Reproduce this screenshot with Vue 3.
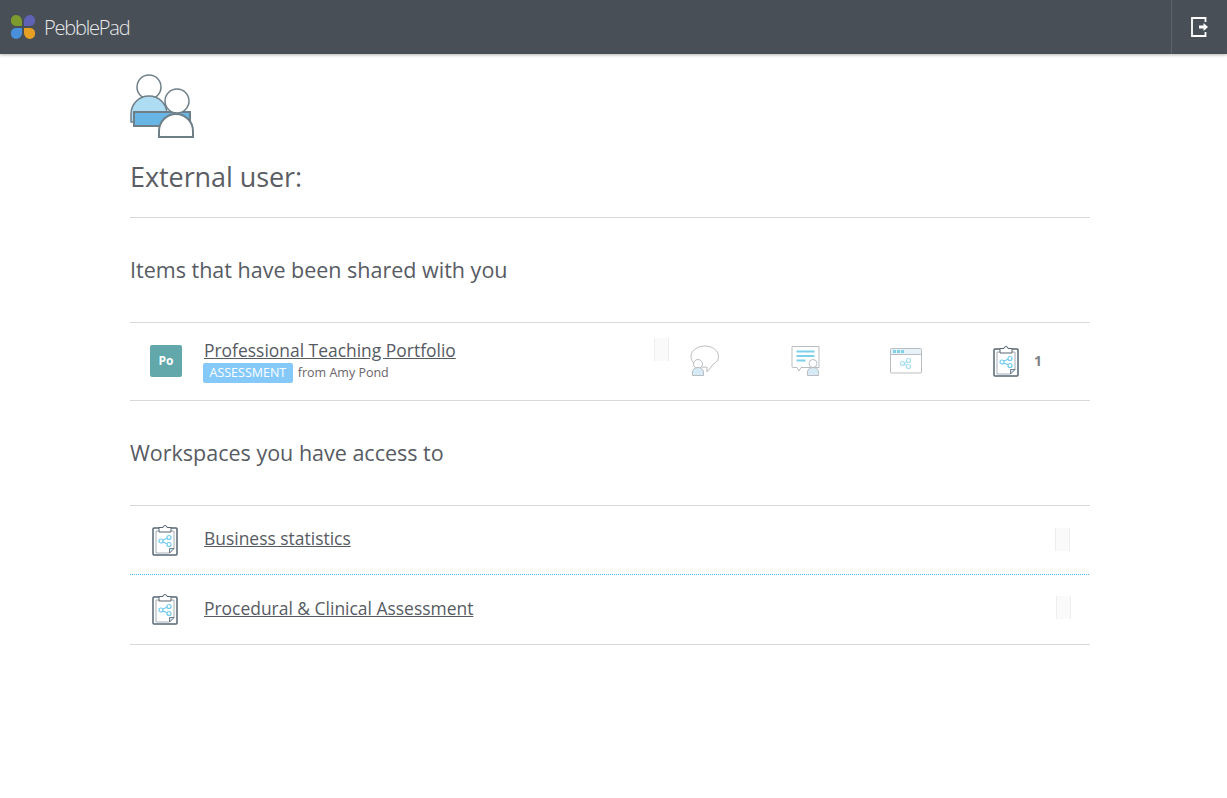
<script setup>
const workspaces = [
  { name: 'Business statistics', ghost: 'ghost-a' },
  { name: 'Procedural & Clinical Assessment', ghost: 'ghost-b' }
]
</script>

<template>
  <div class="page">
    <header class="topbar">
      <div class="brand">
        <svg class="logo" width="26" height="26" viewBox="0 0 26 26">
          <path d="M1 6a5 5 0 0 1 5-5a6 6 0 0 1 6 6v5H6a5 5 0 0 1-5-6z" fill="#7d9a2f"/>
          <path d="M14 7a6 6 0 0 1 6-6a5 5 0 0 1 5 5a5 5 0 0 1-5 6h-6z" fill="#5f62b4"/>
          <path d="M1 20a5 5 0 0 1 5-6h6v5a6 6 0 0 1-6 6a5 5 0 0 1-5-5z" fill="#4a8fdb"/>
          <path d="M14 14h6a5 5 0 0 1 5 6a5 5 0 0 1-5 5a6 6 0 0 1-6-6z" fill="#e6a024"/>
        </svg>
        <span class="wordmark">PebblePad</span>
      </div>
      <button class="logout" aria-label="Log out">
        <svg width="17" height="20" viewBox="0 0 17 20" fill="none">
          <path d="M14.500 5V1H1v18h13.500v-4" stroke="#fff" stroke-width="1.800"/>
          <path d="M8 8.500h4.500V6l4.500 4-4.500 4v-2.500H8z" fill="#fff"/>
        </svg>
      </button>
    </header>

    <main class="content">
      <svg class="users" width="66" height="66" viewBox="0 0 66 66">
        <circle cx="19" cy="13" r="12" fill="#fff" stroke="#6f7f88" stroke-width="1.500"/>
        <path d="M1 48v-8a18 18 0 0 1 36 0v8z" fill="#aedcf3" stroke="#6f7f88" stroke-width="1.500"/>
        <rect x="4" y="38" width="56" height="14" fill="#68b6e6" stroke="#6f7f88" stroke-width="2"/>
        <circle cx="47" cy="27" r="12" fill="#fff" stroke="#6f7f88" stroke-width="1.500"/>
        <path d="M29 63V57a17 17 0 0 1 34 0v6z" fill="#fff" stroke="#6f7f88" stroke-width="2"/>
      </svg>
      <h1>External user:</h1>

      <section class="first">
        <h2>Items that have been shared with you</h2>
        <div class="row shared">
          <div class="tile">Po</div>
          <div class="title-block">
            <a class="link" href="#">Professional Teaching Portfolio</a>
            <div class="meta"><span class="tag">ASSESSMENT</span><span>from Amy Pond</span></div>
          </div>
          <span class="ghost ghost-shared"></span>
          <div class="actions">
            <span class="action a-comment">
              <svg width="30" height="32" viewBox="0 0 30 32" fill="none">
                <path d="M15 1C22.500 1 28.500 5.500 28.500 11.500C28.500 15 26.500 17.500 23.500 19L17 27V22C16 22.200 15 22.200 14 22.200C7 22.200 1 17.500 1 11.500C1 5.500 7.500 1 15 1z" fill="#fff" stroke="#b9bdc1"/>
                <circle cx="8" cy="19" r="4.500" fill="#fff" stroke="#b9bdc1"/>
                <path d="M2.500 30.500v-3.500a5.500 4.500 0 0 1 11 0v3.500z" fill="#d7ebf6" stroke="#b9bdc1"/>
              </svg>
            </span>
            <span class="action a-feedback">
              <svg width="30" height="32" viewBox="0 0 30 32" fill="none">
                <path d="M1 1.500h27v21H10l-2 3.500l-2-3.500H2a1 1 0 0 1-1-1z" fill="#fff" stroke="#b9bdc1"/>
                <path d="M5.500 6.500h18M5.500 11h18M5.500 15.500h9" stroke="#7fd0ea" stroke-width="2"/>
                <circle cx="22" cy="18.500" r="4" fill="#fff" stroke="#b9bdc1"/>
                <path d="M16.500 30.500v-3.500a5.500 4.500 0 0 1 11 0v3.500z" fill="#d7ebf6" stroke="#b9bdc1"/>
              </svg>
            </span>
            <span class="action a-window">
              <svg width="32" height="26" viewBox="0 0 32 26" fill="none">
                <rect x=".5" y=".5" width="31" height="24.500" rx="1" fill="#fff" stroke="#b9bdc1"/>
                <rect x="1" y="1" width="30" height="5" fill="#e6f1f8"/>
                <path d="M1 6.500h30" stroke="#b9bdc1"/>
                <path d="M3 2h3v3H3zM7 2h3v3H7zM11 2h3v3h-3z" fill="#7fd0ea"/>
                <g stroke="#a8dff0" stroke-width="1.200"><circle cx="12.500" cy="15.500" r="2"/><circle cx="18.500" cy="12.500" r="2"/><circle cx="18.500" cy="18.500" r="2"/><path d="M14.500 15l2.300-1.500M14.500 16l2.300 1.500"/></g>
              </svg>
            </span>
            <span class="action a-board">
              <svg width="26" height="33" viewBox="0 0 26 33" fill="none">
                <path d="M2 5h22a1 1 0 0 1 1 1v25a1 1 0 0 1-1 1H2a1 1 0 0 1-1-1V6a1 1 0 0 1 1-1z" fill="#fff" stroke="#566673" stroke-width="1.500"/>
                <path d="M4 8h18v17.500l-4.500 4.500H4z" fill="#fff" stroke="#8c9aa5" stroke-width=".8"/>
                <path d="M22 25.500l-4.500 4.500v-4.500z" fill="#d5e6f3" stroke="#566673" stroke-width=".8"/>
                <path d="M7 9V4.500h4a2 2 0 0 1 4 0h4V9z" fill="#fff" stroke="#566673"/>
                <g stroke="#6fcbee" stroke-width="1.200"><circle cx="9" cy="18" r="2"/><circle cx="17" cy="14.500" r="2"/><circle cx="17" cy="21.500" r="2"/><path d="M11 17l4-1.800M11 19l4 1.800"/></g>
              </svg>
              <b class="count">1</b>
            </span>
          </div>
        </div>
      </section>

      <section class="second">
        <h2>Workspaces you have access to</h2>
        <div v-for="(w, i) in workspaces" :key="w.name" class="row ws" :class="{ dotted: i === 0 }">
          <svg class="board" width="26" height="33" viewBox="0 0 26 33" fill="none">
            <path d="M2 5h22a1 1 0 0 1 1 1v25a1 1 0 0 1-1 1H2a1 1 0 0 1-1-1V6a1 1 0 0 1 1-1z" fill="#fff" stroke="#566673" stroke-width="1.500"/>
            <path d="M4 8h18v17.500l-4.500 4.500H4z" fill="#fff" stroke="#8c9aa5" stroke-width=".8"/>
            <path d="M22 25.500l-4.500 4.500v-4.500z" fill="#d5e6f3" stroke="#566673" stroke-width=".8"/>
            <path d="M7 9V4.500h4a2 2 0 0 1 4 0h4V9z" fill="#fff" stroke="#566673"/>
            <g stroke="#6fcbee" stroke-width="1.200"><circle cx="9" cy="18" r="2"/><circle cx="17" cy="14.500" r="2"/><circle cx="17" cy="21.500" r="2"/><path d="M11 17l4-1.800M11 19l4 1.800"/></g>
          </svg>
          <a class="link ws-link" href="#">{{ w.name }}</a>
          <span class="ghost" :class="w.ghost"></span>
        </div>
      </section>
    </main>
  </div>
</template>

<style>
html, body { margin: 0; background: #fff; }
</style>

<style scoped>
.page {
  min-height: 798px;
  background: #fff;
  font-family: "Open Sans", "Liberation Sans", sans-serif;
  color: #575b63;
}
.topbar {
  height: 54px;
  background: #484f57;
  box-shadow: 0 1px 3px rgba(0, 0, 0, .3);
  display: flex;
  justify-content: space-between;
  align-items: stretch;
}
.brand { display: flex; align-items: center; padding-left: 10px; }
.logo { display: block; }
.wordmark {
  margin-left: 8px;
  color: #e8eaeb;
  font-size: 20px;
  font-weight: 300;
  letter-spacing: -1.2px;
}
.logout {
  width: 56px;
  padding: 0;
  border: 0;
  border-left: 1px solid #5d646c;
  background: transparent;
  display: flex;
  align-items: center;
  justify-content: center;
}
.content { width: 960px; margin-left: 130px; padding-top: 20px; }
.users { display: block; }
h1 {
  margin: 19px 0 0;
  height: 58px;
  font-size: 27px;
  line-height: 36px;
  font-weight: 400;
  letter-spacing: -0.07px;
  border-bottom: 1px solid #d9d9d9;
  color: #5a5d63;
}
h2 {
  margin: 0;
  font-size: 21.500px;
  font-weight: 400;
  line-height: 30px;
  color: #575b63;
}
.first { padding-top: 37px; }
.first h2 { height: 67px; }
.second { padding-top: 37px; }
.second h2 { height: 67px; }
.row {
  display: flex;
  align-items: center;
  border-top: 1px solid #d9d9d9;
  position: relative;
}
.shared { height: 75px; padding-bottom: 2px; border-bottom: 1px solid #d9d9d9; }
.tile {
  width: 32px;
  height: 32px;
  margin-left: 20px;
  background: #62a8ab;
  border-radius: 2px;
  color: #fff;
  font-size: 12px;
  font-weight: 700;
  line-height: 32px;
  text-align: center;
}
.title-block { margin-left: 22px; width: 450px; }
.link {
  color: #575b63;
  font-size: 17.450px;
  line-height: 22px;
  text-decoration: underline;
}
.meta {
  display: flex;
  align-items: center;
  gap: 5px;
  margin: 1px 0 -1px -1px;
  font-size: 12.500px;
  line-height: 20px;
  color: #6b6468;
}
.tag {
  background: #84c9fa;
  color: #fff;
  border-radius: 2px;
  padding: 0 6.500px;
}
.ghost {
  width: 15px;
  height: 23px;
  box-sizing: border-box;
  background: #fafafa;
  border-left: 1px solid #eee;
  border-right: 1px solid #eee;
  display: block;
}
.ghost-shared { margin-top: -22px; }
.actions { display: flex; margin-left: 21px; align-items: center; }
.action { display: flex; align-items: center; }
.action svg { display: block; }
.a-comment { width: 101px; }
.a-feedback { width: 99px; }
.a-window { width: 103px; }
.count {
  margin-left: 15px;
  font-size: 14px;
  color: #7f8285;
}
.ws { height: 66px; padding-bottom: 2px; }
.ws:last-child { border-bottom: 1px solid #d9d9d9; }
.dotted { border-bottom: 1px solid transparent; }
.dotted::after {
  content: "";
  position: absolute;
  left: 0;
  right: 0;
  bottom: -1px;
  height: 1px;
  background: repeating-linear-gradient(90deg, #4eb8ea 0 1px, #fff 1px 2px);
}
.dotted + .ws { border-top: 0; height: 67px; }
.board { margin-left: 22px; }
.ws-link { margin-left: 26px; margin-bottom: 2px; }
.ghost-a { position: absolute; left: 925px; top: 22px; }
.ghost-b { position: absolute; left: 926px; top: 21px; }
</style>
